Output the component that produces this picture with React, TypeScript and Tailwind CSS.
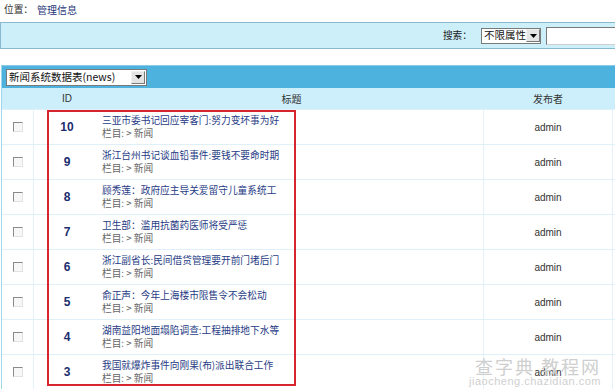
import React from "react";

const rows = [
  { id: 10, title: "三亚市委书记回应宰客门:努力变坏事为好" },
  { id: 9, title: "浙江台州书记谈血铅事件:要钱不要命时期" },
  { id: 8, title: "顾秀莲：政府应主导关爱留守儿童系统工" },
  { id: 7, title: "卫生部：滥用抗菌药医师将受严惩" },
  { id: 6, title: "浙江副省长:民间借贷管理要开前门堵后门" },
  { id: 5, title: "俞正声：今年上海楼市限售令不会松动" },
  { id: 4, title: "湖南益阳地面塌陷调查:工程抽排地下水等" },
  { id: 3, title: "我国就爆炸事件向刚果(布)派出联合工作" },
];

function Checkbox() {
  return (
    <span className="block h-[10px] w-[10px] border border-t-[#8a8a8a] border-l-[#8a8a8a] border-b-[#e2e2e2] border-r-[#e2e2e2] bg-[#f7f7f7]" />
  );
}

function SelectArrow() {
  return (
    <span className="flex h-[13px] w-[14px] shrink-0 items-center justify-center border border-t-[#f0f0f0] border-l-[#f0f0f0] border-b-[#7a7a7a] border-r-[#7a7a7a] bg-[#e4e4e4]">
      <svg width="7" height="4" viewBox="0 0 7 4">
        <path d="M0 0h7L3.5 4z" fill="#000" />
      </svg>
    </span>
  );
}

export default function App() {
  return (
    <div className="h-[389px] w-[615px] overflow-hidden bg-white text-[9.7px] text-[#333] [font-family:'Noto_Sans_CJK_SC','Noto_Sans',sans-serif]">
      {/* 位置 */}
      <div className="flex h-[20px] items-center pl-[4px] leading-none">
        <span className="text-[#333]">位置：</span>
        <span className="ml-[4px] text-[10px] text-[#1f3577]">管理信息</span>
      </div>

      {/* 搜索 */}
      <div className="mt-[2px] flex h-[27px] items-center border-y border-l border-y-[#8ab9cf] border-l-[#8ab9cf] bg-[#cdeffa]">
        <div className="ml-auto flex items-center">
          <span className="mr-[9px] text-[#222]">搜索：</span>
          <div className="flex h-[16px] w-[60px] items-center justify-between border border-[#7a7a7a] bg-white pl-[2px] pr-[1px]">
            <span className="whitespace-nowrap text-[10.5px] leading-none text-[#111]">不限属性</span>
            <SelectArrow />
          </div>
          <div className="ml-[5px] h-[18px] w-[69px] border border-t-[#7a7a7a] border-l-[#7a7a7a] border-b-[#d0d0d0] border-r-0 bg-white" />
        </div>
      </div>

      {/* 表格 */}
      <div className="relative mt-[16px] ml-[1px] border-l border-[#9fd6ea]">
        <div className="flex h-[23px] items-center border-t border-[#8ccbe6] bg-[#4db2dd] pl-[4px]">
          <div className="flex h-[17px] w-[141px] items-center justify-between border border-[#7a7a7a] bg-white pl-[2px] pr-[1px]">
            <span className="whitespace-nowrap text-[10.5px] leading-none text-[#111]">新闻系统数据表(news)</span>
            <SelectArrow />
          </div>
        </div>
        <div className="grid h-[21px] grid-cols-[32px_66px_383px_130px_1fr] items-center bg-[#cdeffb] text-[10px] text-[#333]">
          <span />
          <span className="text-center [font-family:'Liberation_Sans',sans-serif]">ID</span>
          <span className="text-center">标题</span>
          <span className="text-center">发布者</span>
          <span />
        </div>
        {rows.map((r) => (
          <div
            key={r.id}
            className="grid h-[35px] grid-cols-[32px_66px_383px_130px_1fr] border-t border-[#dff0f8] bg-white"
          >
            <div className="flex items-center justify-center border-r border-[#e3f2f9]">
              <Checkbox />
            </div>
            <div className="flex items-center justify-center font-bold text-[12px] text-[#1c2e6e] [font-family:'Liberation_Sans',sans-serif]">
              {r.id}
            </div>
            <div className="flex flex-col justify-center pl-[2px] leading-[13px]">
              <span className="whitespace-nowrap text-[#283c85]">{r.title}</span>
              <span className="whitespace-nowrap text-[#666]">栏目: &gt; 新闻</span>
            </div>
            <div className="flex items-center justify-center border-x border-[#e3f2f9] text-[10px] text-[#333] [font-family:'Liberation_Sans',sans-serif]">
              admin
            </div>
            <div />
          </div>
        ))}

        {/* 红框标注 */}
        <div className="pointer-events-none absolute left-[45px] top-[45px] h-[276px] w-[249px] border-2 border-[#d6252e]" />

        {/* 水印 */}
        <div className="pointer-events-none absolute right-[14px] top-[292px] flex flex-col items-end leading-none text-[#cfcfcf]">
          <span className="text-[18px] tracking-[2px]">查字典 教程网</span>
          <span className="mt-[1px] text-[11px] tracking-[0.5px] [font-family:'Liberation_Sans',sans-serif]">jiaocheng.chazidian.com</span>
        </div>
      </div>
    </div>
  );
}
